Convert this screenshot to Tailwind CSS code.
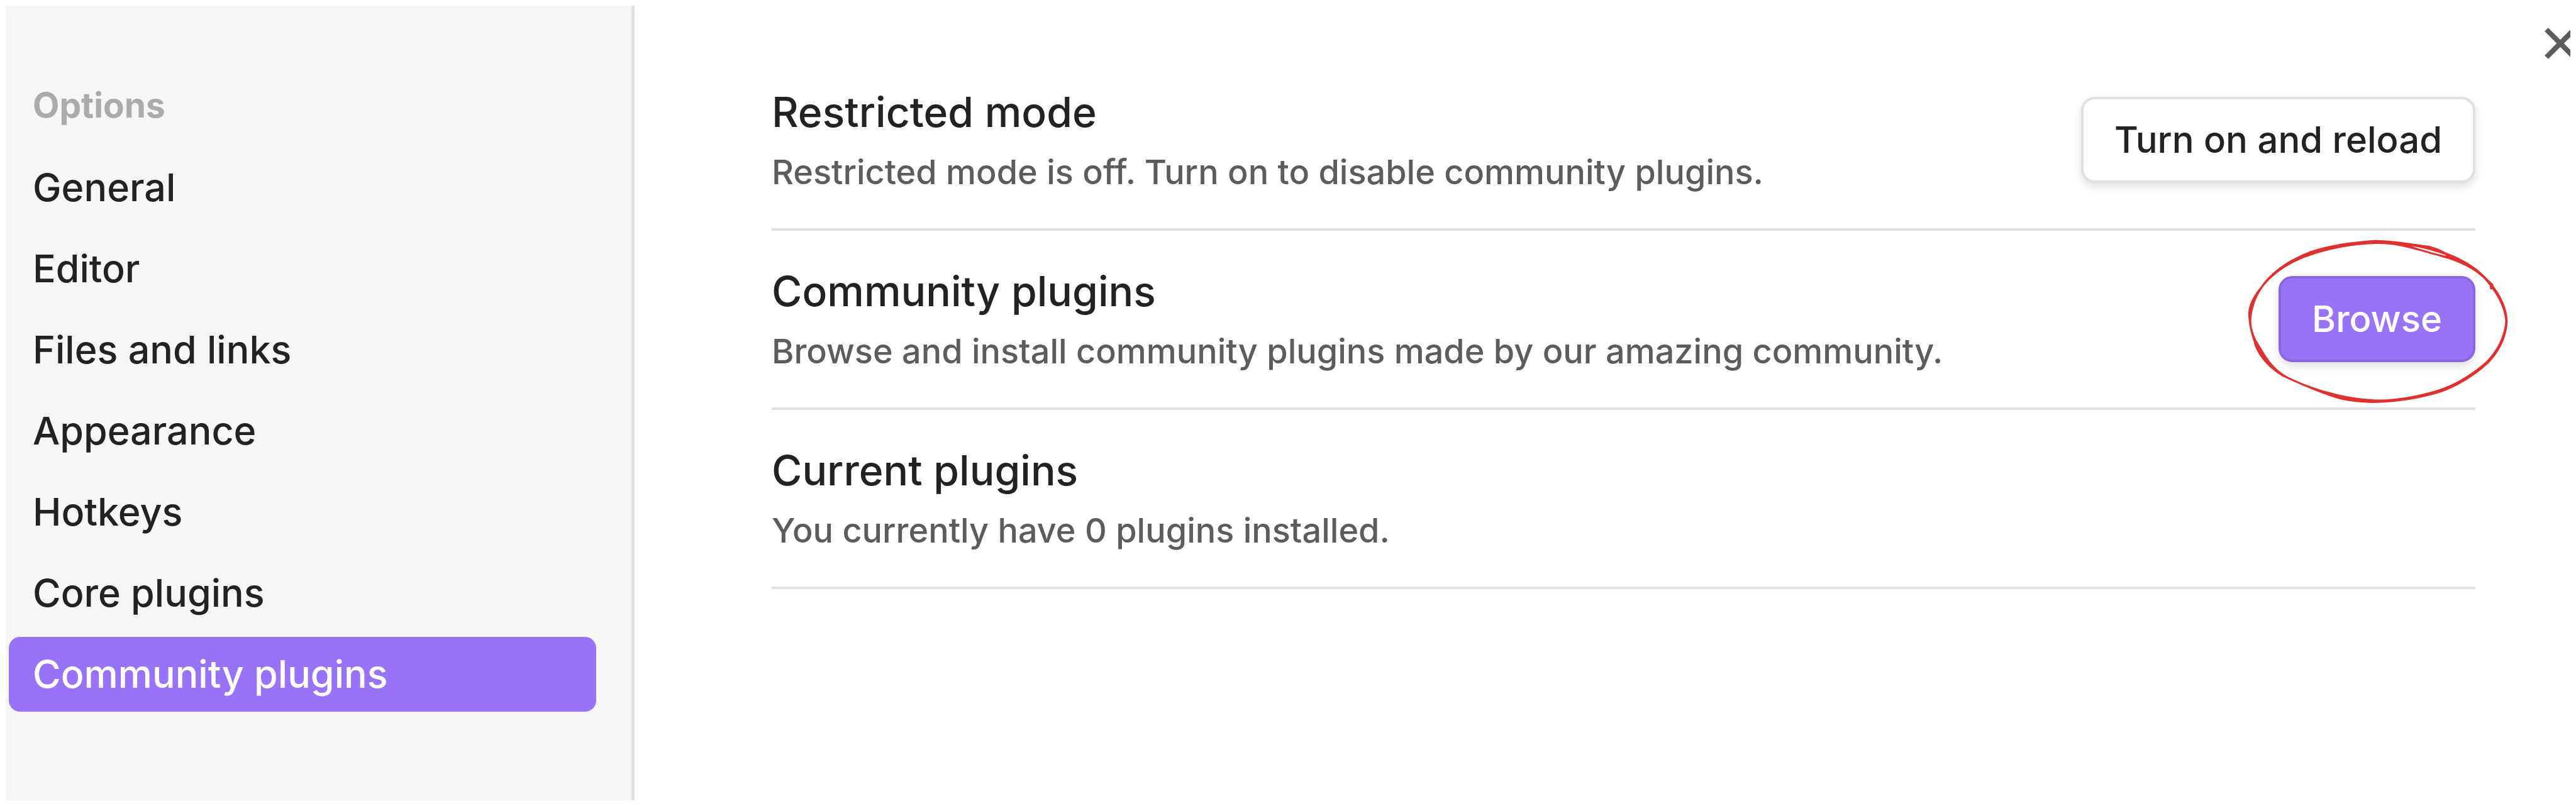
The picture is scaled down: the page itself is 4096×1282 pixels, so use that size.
<!DOCTYPE html>
<html lang="en">
<head>
<meta charset="utf-8">
<title>Settings</title>
<script src="https://cdn.jsdelivr.net/npm/@tailwindcss/browser@4"></script>
</head>
<body class="bg-white font-['Inter',sans-serif] font-medium text-[#222222]">
<div class="flex min-h-screen p-[9px]">
  <aside class="flex w-[1000px] shrink-0 flex-col border-r-[5px] border-[#e0e0e0] bg-[#f6f6f6] pt-[118px] pr-[56px] pl-[5px]">
    <h2 class="px-[38px] text-[55px] leading-[80px] font-bold text-[#ababab]">Options</h2>
    <nav class="mt-[32px] flex flex-col gap-[10px] text-[61px] leading-[119px]">
      <a href="#" class="rounded-[18px] px-[38px]">General</a>
      <a href="#" class="rounded-[18px] px-[38px]">Editor</a>
      <a href="#" class="rounded-[18px] px-[38px]">Files and links</a>
      <a href="#" class="rounded-[18px] px-[38px]">Appearance</a>
      <a href="#" class="rounded-[18px] px-[38px]">Hotkeys</a>
      <a href="#" class="rounded-[18px] px-[38px]">Core plugins</a>
      <a href="#" class="rounded-[18px] bg-[#9873f7] px-[38px] text-white">Community plugins</a>
    </nav>
  </aside>
  <main class="relative min-w-0 flex-1 overflow-hidden pt-[73px] pr-[151px] pl-[218px]">
    <section class="flex h-[285px] items-center justify-between border-b-4 border-[#e0e0e0]">
      <div class="flex flex-col gap-[6px] pb-[4px]">
        <h3 class="text-[66px] leading-[100px]">Restricted mode</h3>
        <p class="text-[54px] leading-[80px] text-[#5c5c5c]">Restricted mode is off. Turn on to disable community plugins.</p>
      </div>
      <button class="h-[137px] rounded-[22px] border-4 border-[#e0e0e0] bg-white px-[49px] text-[58px] shadow-[0_6px_14px_rgba(0,0,0,0.13)]">Turn on and reload</button>
    </section>
    <section class="flex h-[285px] items-center justify-between border-b-4 border-[#e0e0e0]">
      <div class="flex flex-col gap-[6px] pb-[4px]">
        <h3 class="text-[66px] leading-[100px]">Community plugins</h3>
        <p class="text-[54px] leading-[80px] text-[#5c5c5c]">Browse and install community plugins made by our amazing community.</p>
      </div>
      <div class="relative">
        <button class="block h-[137px] rounded-[22px] border-4 border-[#8967de] bg-[#9873f7] px-[49px] text-[58px] text-white shadow-[0_6px_14px_rgba(0,0,0,0.13)]">Browse</button>
        <!-- hand-drawn ring around the button -->
        <svg class="pointer-events-none absolute -top-[63px] -right-[60px] h-[270px] w-[427px] max-w-none" viewBox="0 0 1351 855" fill="#e03131" aria-hidden="true">
          <path fill-rule="evenodd" d="M655 18C740 18 860 38 910 45C960 50 1000 75 1020 84C1120 122 1180 165 1240 232C1290 295 1323 360 1324 425C1322 505 1285 580 1230 637C1150 712 1060 760 990 785C900 812 780 839 640 839C560 837 500 828 460 815C370 785 270 742 190 705C125 668 60 600 45 530C28 480 18 430 18 385C22 335 50 290 80 255C130 180 220 115 330 75C420 42 540 26 655 18Z M655 38C740 36 790 50 840 62C900 78 960 95 1010 109C1100 135 1180 180 1220 230C1270 290 1308 360 1312 425C1308 500 1270 575 1215 630C1140 697 1050 748 975 772C880 800 780 822 660 822C570 817 500 805 440 788C360 768 270 735 210 703C130 655 100 590 60 525C45 495 33 460 33 425C36 360 60 300 90 258C140 190 230 130 330 97C420 65 540 42 655 38Z M840 48C900 58 960 75 1015 95L1010 97C950 84 890 66 840 48Z"/>
          <path d="M318 84L332 72L348 77ZM1232 225L1236 267L1248 266L1252 240Z"/>
        </svg>
      </div>
    </section>
    <section class="flex h-[285px] items-center justify-between border-b-4 border-[#e0e0e0]">
      <div class="flex flex-col gap-[6px] pb-[4px]">
        <h3 class="text-[66px] leading-[100px]">Current plugins</h3>
        <p class="text-[54px] leading-[80px] text-[#5c5c5c]">You currently have 0 plugins installed.</p>
      </div>
    </section>
    <button aria-label="Close" class="absolute top-[28px] -right-[16px] size-[64px] text-[#5c5c5c]">
      <svg class="size-full" viewBox="0 0 64 64" fill="none" stroke="currentColor" stroke-width="8"><path d="M10 10L54 54M54 10L10 54"/></svg>
    </button>
  </main>
</div>
</body>
</html>
